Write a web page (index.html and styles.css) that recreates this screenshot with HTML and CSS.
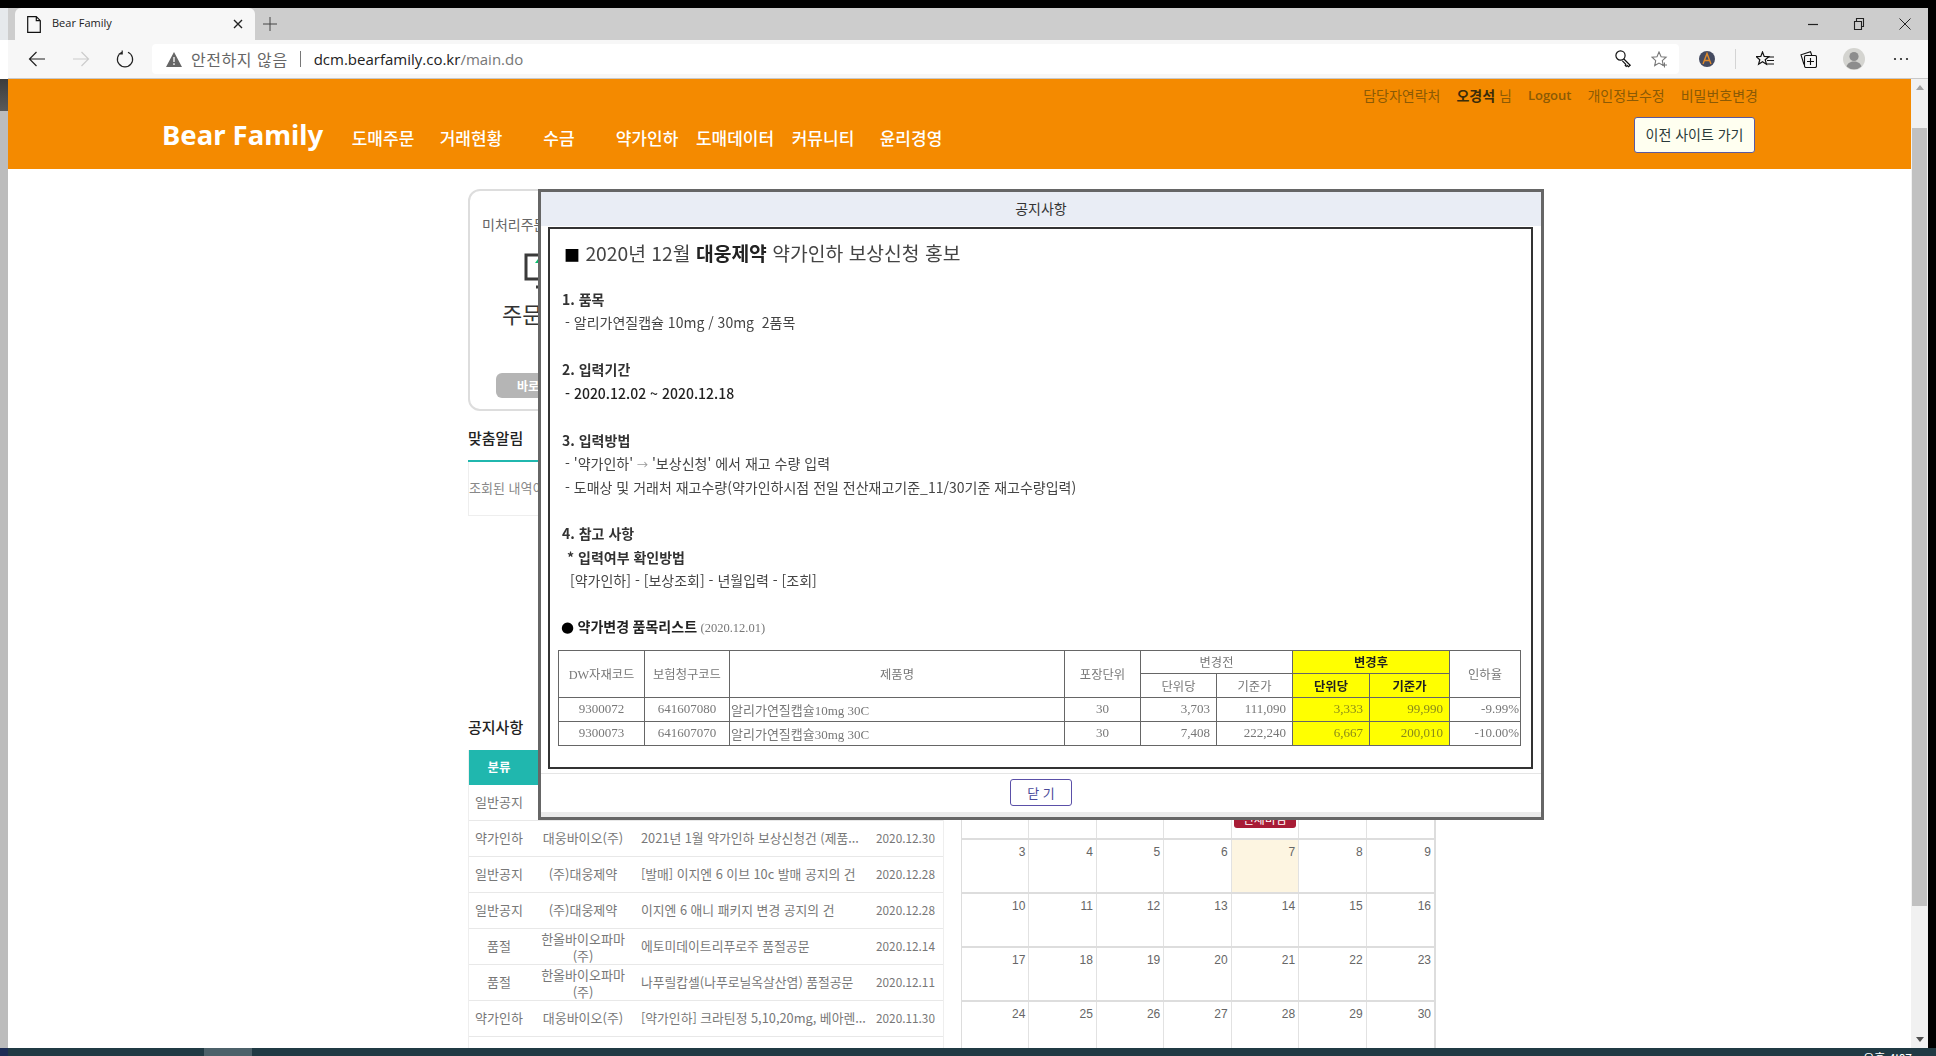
FILE: index.html
```html
<!DOCTYPE html>
<html lang="ko">
<head>
<meta charset="utf-8">
<title>Bear Family</title>
<link rel="stylesheet" href="styles.css">
</head>
<body>
<div class="top-edge"></div>
<div class="desk">
  <div class="behind">
    <div class="behind-a"></div>
    <div class="behind-b"></div>
    <div class="behind-c"></div>
    <div class="behind-d"></div>
  </div>
  <div class="browser">
    <div class="tabstrip">
      <div class="tab">
        <svg class="tab-page" width="14" height="17" viewBox="0 0 14 17"><path d="M.7.7h8.6l4 4v11.6H.7zM9.3.7v4h4" fill="none" stroke="#111" stroke-width="1.2"/></svg>
        <span class="tab-title">Bear Family</span>
        <svg class="tab-x" width="10" height="10" viewBox="0 0 10 10"><path d="M1 1l8 8M9 1l-8 8" stroke="#222" stroke-width="1.4"/></svg>
      </div>
      <svg class="tab-plus" width="14" height="14" viewBox="0 0 14 14"><path d="M7 0v14M0 7h14" stroke="#444" stroke-width="1"/></svg>
      <div class="win-ctrls">
        <svg width="12" height="12" viewBox="0 0 12 12"><path d="M1 6.500h10" stroke="#222" stroke-width="1.2"/></svg>
        <svg width="12" height="12" viewBox="0 0 12 12"><path d="M1.500 3.500h7v8h-7zM3.500 3.500v-3h7v8h-2" fill="none" stroke="#222" stroke-width="1.1"/></svg>
        <svg width="12" height="12" viewBox="0 0 12 12"><path d="M.5.5l11 11M11.500.5l-11 11" stroke="#222" stroke-width="1"/></svg>
      </div>
    </div>
    <div class="toolbar">
      <svg class="tb-back" width="18" height="16" viewBox="0 0 18 16"><path d="M17 8H1.500M8.500 1l-7 7 7 7" fill="none" stroke="#222" stroke-width="1.2"/></svg>
      <svg class="tb-fwd" width="18" height="16" viewBox="0 0 18 16"><path d="M1 8h15.500M9.500 1l7 7-7 7" fill="none" stroke="#ccc" stroke-width="1.2"/></svg>
      <svg class="tb-reload" width="18" height="18" viewBox="0 0 18 18"><path d="M6 2.200A7.600 7.600 0 1 0 12 2.200M6.200 .5v3.400H2.800" fill="none" stroke="#222" stroke-width="1.2"/></svg>
      <div class="address">
        <svg class="warn" width="16" height="15" viewBox="0 0 16 15"><path d="M8 0l8 15H0z" fill="#666"/><path d="M8 5v5M8 11.300v1.600" stroke="#fff" stroke-width="1.3"/></svg>
        <span class="insecure">안전하지 않음</span>
        <span class="addr-sep"></span>
        <span class="host">dcm.bearfamily.co.kr</span><span class="path">/main.do</span>
        <svg class="key" width="17" height="18" viewBox="0 0 17 18"><circle cx="5.500" cy="5.500" r="4.600" fill="none" stroke="#111" stroke-width="1.2"/><path d="M8.600 8.800l6.600 6.400-1.700 1.600-1.300-1.200-1 .8-1-1.100 .6-1-3.400-3.400" fill="none" stroke="#111" stroke-width="1.2"/></svg>
        <svg class="star-plus" width="17" height="17" viewBox="0 0 17 17"><path d="M8 1l2.100 4.700 5 .5-3.800 3.400 1 4.900L8 12.100 3.700 14.600l1-4.900L1 6.200l5-.5z" fill="none" stroke="#777" stroke-width="1.1"/><path d="M13.500 11.500v5M11 14h5" stroke="#777" stroke-width="1"/></svg>
      </div>
      <svg class="ext" width="16" height="16" viewBox="0 0 16 16"><circle cx="8" cy="8" r="8" fill="#444a60"/><path d="M4 13L8 2.500 12 13M5.500 9.500h5" fill="none" stroke="#e08a2a" stroke-width="1.400"/></svg>
      <span class="tb-sep"></span>
      <svg class="favs" width="18" height="17" viewBox="0 0 18 17"><path d="M6.500 1l1.700 4.400 4.600.3-3.600 3 1.200 4.500-3.900-2.500-3.900 2.500 1.200-4.500L.2 5.700l4.600-.3z" fill="none" stroke="#111" stroke-width="1.2"/><path d="M11 6h7M11 9.500h7M10 13h8" stroke="#111" stroke-width="1.1"/></svg>
      <svg class="colls" width="17" height="17" viewBox="0 0 17 17"><path d="M4 13.500L1 3.800 10.500.8l1.200 3.200" fill="none" stroke="#111" stroke-width="1.1"/><rect x="4.500" y="4.500" width="12" height="12" rx="1.500" fill="#f7f7f7" stroke="#111" stroke-width="1.1"/><path d="M10.500 7v7M7 10.500h7" stroke="#111" stroke-width="1.1"/></svg>
      <svg class="avatar" width="22" height="22" viewBox="0 0 22 22"><circle cx="11" cy="11" r="11" fill="#d4d4d0"/><circle cx="11" cy="8.500" r="4.600" fill="#8d8d8d"/><path d="M3.600 18.500c1-3.600 4-5 7.400-5s6.400 1.400 7.400 5A11 11 0 0 1 3.600 18.500z" fill="#8d8d8d"/></svg>
      <svg class="dots" width="16" height="4" viewBox="0 0 16 4"><circle cx="2" cy="2" r="1.100" fill="#222"/><circle cx="8" cy="2" r="1.100" fill="#222"/><circle cx="14" cy="2" r="1.100" fill="#222"/></svg>
    </div>
    <div class="page-area">
      <div class="viewport">
        <header class="site-head">
          <div class="util">
            <a class="util-link">담당자연락처</a>
            <span class="util-link"><b class="user">오경석</b> 님</span>
            <a class="util-link util-logout">Logout</a>
            <a class="util-link">개인정보수정</a>
            <a class="util-link">비밀번호변경</a>
          </div>
          <div class="main-row">
            <div class="logo">Bear Family</div>
            <nav class="gnb">
              <a>도매주문</a><a>거래현황</a><a>수금</a><a>약가인하</a><a>도매데이터</a><a>커뮤니티</a><a>윤리경영</a>
            </nav>
            <button class="old-site">이전 사이트 가기</button>
          </div>
        </header>
        <main class="content">
          <section class="col-left">
            <div class="order-card">
              <p class="card-label">미처리주문</p>
              <svg class="monitor" width="50" height="36" viewBox="0 0 50 36"><path d="M2 2h46v24H2zM18 26v7M12 34h26" fill="none" stroke="#3a3a3a" stroke-width="3"/><path d="M17 2l-6 8h4v10h4V10h4z" fill="#0cbf6d"/></svg>
              <p class="card-big">주문 현황</p>
              <span class="card-btn">바로가기</span>
            </div>
            <h2 class="sec-title">맞춤알림</h2>
            <div class="alert-box">조회된 내역이 없습니다.</div>
            <h2 class="sec-title notice-title">공지사항</h2>
            <table class="notice-table">
              <colgroup><col class="c1"><col class="c2"><col class="c3"><col class="c4"></colgroup>
              <thead><tr><th>분류</th><th>제약사</th><th>제목</th><th>등록일</th></tr></thead>
              <tbody>
                <tr><td>일반공지</td><td>(주)대웅제약</td><td class="t">공지사항</td><td>2021.01.04</td></tr>
                <tr><td>약가인하</td><td>대웅바이오(주)</td><td class="t">2021년 1월 약가인하 보상신청건 (제품...</td><td>2020.12.30</td></tr>
                <tr><td>일반공지</td><td>(주)대웅제약</td><td class="t">[발매] 이지엔 6 이브 10c 발매 공지의 건</td><td>2020.12.28</td></tr>
                <tr><td>일반공지</td><td>(주)대웅제약</td><td class="t">이지엔 6 애니 패키지 변경 공지의 건</td><td>2020.12.28</td></tr>
                <tr><td>품절</td><td class="wrap">한올바이오파마(주)</td><td class="t">에토미데이트리푸로주 품절공문</td><td>2020.12.14</td></tr>
                <tr><td>품절</td><td class="wrap">한올바이오파마(주)</td><td class="t">나푸릴캅셀(나푸로닐옥살산염) 품절공문</td><td>2020.12.11</td></tr>
                <tr><td>약가인하</td><td>대웅바이오(주)</td><td class="t">[약가인하] 크라틴정 5,10,20mg, 베아렌...</td><td>2020.11.30</td></tr>
                <tr><td></td><td></td><td></td><td></td></tr>
              </tbody>
            </table>
          </section>
          <section class="calendar">
            <div class="week">
              <div class="day"><span>27</span></div><div class="day"><span>28</span></div><div class="day"><span>29</span></div><div class="day"><span>30</span></div><div class="day"><span>31</span><em class="badge">전체마감</em></div><div class="day"><span>1</span></div><div class="day"><span>2</span></div>
            </div>
            <div class="week">
              <div class="day"><span>3</span></div><div class="day"><span>4</span></div><div class="day"><span>5</span></div><div class="day"><span>6</span></div><div class="day today"><span>7</span></div><div class="day"><span>8</span></div><div class="day"><span>9</span></div>
            </div>
            <div class="week">
              <div class="day"><span>10</span></div><div class="day"><span>11</span></div><div class="day"><span>12</span></div><div class="day"><span>13</span></div><div class="day"><span>14</span></div><div class="day"><span>15</span></div><div class="day"><span>16</span></div>
            </div>
            <div class="week">
              <div class="day"><span>17</span></div><div class="day"><span>18</span></div><div class="day"><span>19</span></div><div class="day"><span>20</span></div><div class="day"><span>21</span></div><div class="day"><span>22</span></div><div class="day"><span>23</span></div>
            </div>
            <div class="week">
              <div class="day"><span>24</span></div><div class="day"><span>25</span></div><div class="day"><span>26</span></div><div class="day"><span>27</span></div><div class="day"><span>28</span></div><div class="day"><span>29</span></div><div class="day"><span>30</span></div>
            </div>
          </section>
        </main>
        <div class="modal">
          <div class="modal-title">공지사항</div>
          <div class="modal-body">
            <div class="doc">
              <h1 class="doc-h"><span class="sq">■</span> 2020년 12월 <b>대웅제약</b> 약가인하 보상신청 홍보</h1>
              <p class="l h">1. 품목</p>
              <p class="l s">- 알리가연질캡슐 10mg / 30mg&nbsp; 2품목</p>
              <p class="l">&nbsp;</p>
              <p class="l h">2. 입력기간</p>
              <p class="l s strong">- 2020.12.02 ~ 2020.12.18</p>
              <p class="l">&nbsp;</p>
              <p class="l h">3. 입력방법</p>
              <p class="l s">- '약가인하' <span class="arrow">→</span> '보상신청' 에서 재고 수량 입력</p>
              <p class="l s">- 도매상 및 거래처 재고수량(약가인하시점 전일 전산재고기준_11/30기준 재고수량입력)</p>
              <p class="l">&nbsp;</p>
              <p class="l h">4. 참고 사항</p>
              <p class="l s2 h">* 입력여부 확인방법</p>
              <p class="l s3">[약가인하] - [보상조회] - 년월입력 - [조회]</p>
              <p class="l">&nbsp;</p>
              <p class="l list-h"><span class="dot">●</span> 약가변경 품목리스트 <small>(2020.12.01)</small></p>
              <table class="price">
                <colgroup><col class="p1"><col class="p2"><col class="p3"><col class="p4"><col class="p5"><col class="p6"><col class="p7"><col class="p8"><col class="p9"></colgroup>
                <tr><th rowspan="2">DW자재코드</th><th rowspan="2">보험청구코드</th><th rowspan="2">제품명</th><th rowspan="2">포장단위</th><th colspan="2">변경전</th><th colspan="2" class="y b">변경후</th><th rowspan="2">인하율</th></tr>
                <tr class="sub"><th>단위당</th><th>기준가</th><th class="y b">단위당</th><th class="y b">기준가</th></tr>
                <tr class="data"><td>9300072</td><td>641607080</td><td class="name">알리가연질캡슐10mg 30C</td><td>30</td><td class="r">3,703</td><td class="r">111,090</td><td class="r y">3,333</td><td class="r y">99,990</td><td class="r pct">-9.99%</td></tr>
                <tr class="data"><td>9300073</td><td>641607070</td><td class="name">알리가연질캡슐30mg 30C</td><td>30</td><td class="r">7,408</td><td class="r">222,240</td><td class="r y">6,667</td><td class="r y">200,010</td><td class="r pct">-10.00%</td></tr>
              </table>
            </div>
          </div>
          <div class="modal-foot"><button class="close-btn">닫 기</button></div>
          <div class="modal-strip"></div>
        </div>
      </div>
      <div class="scrollbar">
        <span class="sb-up"></span>
        <div class="sb-track"><div class="sb-thumb"></div></div>
        <span class="sb-down"></span>
      </div>
    </div>
  </div>
  <div class="right-edge"></div>
</div>
<footer class="taskbar">
  <span class="tb-navy"></span>
  <span class="tb-active"></span>
  <span class="tb-clock">오후 4:07</span>
</footer>
</body>
</html>
```
FILE: styles.css
```css
* { box-sizing: border-box; }
html, body { margin: 0; padding: 0; }
body {
  width: 1936px;
  height: 1056px;
  overflow: hidden;
  background: #000;
  display: flex;
  flex-direction: column;
  font-family: "Noto Sans CJK KR", "Noto Sans", sans-serif;
}
p, h1, h2 { margin: 0; font-weight: normal; }
button { font-family: inherit; cursor: pointer; }

.top-edge { height: 8px; flex: none; background: #000; }
.desk { display: flex; height: 1040px; flex: none; }
.behind { width: 8px; display: flex; flex-direction: column; }
.behind-a { height: 32px; background: #e6e9ec; }
.behind-b { height: 39px; background: #fff; }
.behind-c { height: 32px; background: linear-gradient(#3c3c3c, #5a5a5a); }
.behind-d { flex: 1; background: #bcbcbc; }
.right-edge { width: 8px; background: #000; }

.browser { width: 1920px; display: flex; flex-direction: column; }

/* tab strip */
.tabstrip { height: 32px; background: #cdcdcd; display: flex; align-items: center; padding-left: 7px; flex: none; }
.tab { width: 240px; height: 32px; background: #f7f7f7; border-radius: 6px 6px 0 0; display: flex; align-items: center; padding: 0 12px; }
.tab-page { flex: none; }
.tab-title { font-family: "Open Sans", sans-serif; font-size: 11px; line-height: 14px; padding-bottom: 2px; color: #222; margin-left: 11px; flex: 1; }
.tab-plus { margin-left: 8px; }
.win-ctrls { margin-left: auto; display: flex; gap: 34px; padding-right: 17px; }

/* toolbar */
.toolbar { height: 39px; background: #f7f7f7; border-bottom: 1px solid #c8c8c8; display: flex; align-items: center; padding-left: 20px; flex: none; }
.tb-fwd { margin-left: 26px; }
.tb-reload { margin-left: 26px; }
.address { width: 1527px; height: 30px; background: #fff; border-radius: 4px; margin-left: 18px; display: flex; align-items: center; padding-left: 14px; }
.warn { flex: none; }
.insecure { font-size: 16px; letter-spacing: .55px; color: #666; margin-left: 9px; white-space: nowrap; }
.addr-sep { width: 1px; height: 16px; background: #777; margin: 0 13px 0 12px; }
.host { font-family: "Open Sans", sans-serif; font-size: 15px; color: #222; }
.path { font-family: "Open Sans", sans-serif; font-size: 15px; color: #777; }
.key { margin-left: auto; }
.star-plus { margin: 0 11px 0 19px; }
.ext { margin-left: 20px; }
.tb-sep { width: 1px; height: 20px; background: #d4d4d4; margin-left: 20px; }
.favs { margin-left: 20px; }
.colls { margin-left: 26px; }
.avatar { margin-left: 26px; }
.dots { margin-left: 28px; }

/* page */
.page-area { flex: 1; display: flex; min-height: 0; height: 969px; }
.viewport { width: 1903px; position: relative; overflow: hidden; background: #fff; }
.scrollbar { width: 17px; background: #f1f1f1; display: flex; flex-direction: column; align-items: center; }
.sb-up, .sb-down { height: 17px; width: 17px; flex: none; display: flex; align-items: center; justify-content: center; }
.sb-up::before { content: ""; border: 4px solid transparent; border-top: 0; border-bottom: 5px solid #a3a3a3; }
.sb-down::before { content: ""; border: 4px solid transparent; border-bottom: 0; border-top: 5px solid #505050; }
.sb-track { flex: 1; width: 100%; padding-top: 32px; }
.sb-thumb { height: 778px; background: #c1c1c1; margin: 0 1px; }

/* site header */
.site-head { height: 90px; background: #f48a00; padding: 0 153px 0 154px; }
.util { height: 36px; padding-bottom: 5px; display: flex; justify-content: flex-end; align-items: center; gap: 16px; }
.util-link { font-size: 14px; color: #8b5a05; white-space: nowrap; }
.util-logout { font-family: "Open Sans", sans-serif; font-size: 13px; font-weight: 600; }
.user { color: #3b2c0a; font-weight: 700; }
.main-row { height: 54px; display: flex; align-items: flex-start; }
.logo { font-family: "Noto Sans", sans-serif; font-weight: 700; font-size: 27.500px; line-height: 36px; height: 36px; margin-top: 2px; color: #fff; width: 177px; white-space: nowrap; }
.gnb { display: grid; grid-template-columns: repeat(7, 88px); margin-top: 7px; }
.gnb a { text-align: center; font-size: 17px; font-weight: 500; color: #fff; line-height: 32px; white-space: nowrap; }
.old-site { margin-left: auto; margin-right: 3px; margin-top: 2px; width: 121px; height: 36px; background: #fffff0; border: 1px solid #5a5aa0; border-radius: 3px; font-size: 14px; line-height: 18px; color: #2a3a3a; padding: 0 0 3px; }

/* content */
.content { display: flex; gap: 17px; padding: 20px 0 0 460px; }
.col-left { width: 476px; flex: none; }

.order-card { width: 240px; height: 222px; border: 2px solid #ddd; border-radius: 12px; padding: 24px 0 0 12px; display: flex; flex-direction: column; align-items: flex-start; }
.card-label { font-size: 14px; color: #666; line-height: 18px; white-space: nowrap; }
.monitor { margin: 20px 0 0 42px; }
.card-big { font-size: 22px; color: #333; line-height: 32px; margin: 8px 0 0 20px; white-space: nowrap; }
.card-btn { margin: 44px 0 0 14px; width: 130px; height: 25px; background: #b5b5b5; border-radius: 6px; color: #fff; font-size: 12px; font-weight: 700; line-height: 25px; padding-left: 21px; }

.sec-title { font-size: 15px; font-weight: 500; color: #222; line-height: 22px; }
.order-card + .sec-title { margin-top: 16px; padding-bottom: 11px; border-bottom: 2px solid #20b7ae; }
.alert-box { height: 54px; border: 1px solid #eee; border-top: 0; font-size: 13px; color: #888; line-height: 52px; white-space: nowrap; }
.notice-title { margin-top: 200px; height: 34px; }

.notice-table { width: 476px; table-layout: fixed; border-collapse: separate; border-spacing: 0; border-left: 1px solid #eee; border-right: 1px solid #eee; }
.c1 { width: 60px; }
.c2 { width: 108px; }
.c3 { width: 239px; }
.c4 { width: 67px; }
.notice-table th { height: 35px; background: #20b7ae; color: #fff; font-size: 12.500px; font-weight: 700; padding: 0 0 2px; }
.notice-table td { height: 36px; border-bottom: 1px solid #e8e8e8; font-size: 13px; color: #777; text-align: center; padding: 0 4px 2px; line-height: 17px; white-space: nowrap; }
.notice-table td.wrap { white-space: normal; word-break: break-all; padding: 0 8px; }
.notice-table td.t { font-size: 12.800px; text-align: left; padding: 0 0 2px 4px; overflow: hidden; }
.notice-table td:last-child { padding: 0 0 2px; font-size: 11.800px; text-align: left; }

/* calendar */
.calendar { width: 475px; flex: none; margin-top: 597px; border-left: 1px solid #ddd; border-right: 2px solid #ddd; }
.week { display: grid; grid-template-columns: repeat(7, 1fr); height: 54px; border-bottom: 2px solid #ddd; }
.day { position: relative; border-right: 1px solid #e2e2e2; text-align: right; padding: 3px 3px 0 0; font-family: "Liberation Sans", sans-serif; font-size: 12px; color: #666; line-height: 18px; }
.day:last-child { border-right: 0; }
.today { background: #fdf5e1; }
.badge { position: absolute; left: 2px; right: 2px; top: 24px; height: 18px; background: #a81c36; color: #fff; border-radius: 3px; font-family: "Noto Sans CJK KR", sans-serif; font-style: normal; font-size: 12px; text-align: center; line-height: 18px; }

/* modal */
.modal { position: absolute; left: 530px; top: 110px; width: 1006px; height: 631px; border: 3px solid #666; background: #fff; display: flex; flex-direction: column; }
.modal-title { height: 34px; flex: none; background: #e9edf5; text-align: center; font-size: 14px; color: #333; line-height: 32px; }
.modal-body { margin: 1px 8px 0 7px; height: 542px; flex: none; border: 2px solid #333; }
.doc { padding: 9px 0 0 8px; filter: blur(0.3px); }
.doc-h { font-size: 19.300px; line-height: 30px; color: #444; padding-left: 6px; margin-bottom: 19px; white-space: nowrap; }
.doc-h b { font-weight: 700; color: #222; }
.sq { color: #000; font-size: 16px; }
.l { font-size: 14px; line-height: 23.450px; color: #444; height: 23.450px; padding-left: 4px; white-space: nowrap; }
.l.h { font-weight: 700; color: #333; }
.l.s { padding-left: 7px; }
.l.s2 { padding-left: 9px; }
.l.s3 { padding-left: 12px; }
.arrow { font-size: 11px; color: #999; }
.strong { font-weight: 500; color: #222; }
.list-h { font-weight: 700; color: #222; padding-left: 3px; font-family: "Liberation Serif", "Noto Sans CJK KR", serif; }
.dot { font-family: "DejaVu Sans", sans-serif; font-size: 15px; color: #000; }
.list-h small { font-weight: 400; font-size: 12.500px; color: #777; }

.price { width: 962px; margin-top: 10px; table-layout: fixed; border-collapse: collapse; border: 1px solid #555; font-family: "Liberation Serif", "Noto Sans CJK KR", serif; color: #777; font-size: 13px; }
.p1 { width: 86px; }
.p2 { width: 85px; }
.p3 { width: 335px; }
.p4 { width: 76px; }
.p5 { width: 76px; }
.p6 { width: 76px; }
.p7 { width: 77px; }
.p8 { width: 80px; }
.p9 { width: 71px; }
.price th, .price td { border: 1px solid #666; height: 23.750px; padding: 0 1px; font-weight: 400; text-align: center; white-space: nowrap; }
.price th { font-size: 12.300px; }
.price .data td { border-top-color: #444; }
.price td.name { text-align: left; }
.price td.r { text-align: right; padding-right: 6px; }
.price td.pct { padding-right: 1px; }
.price .y { background: #ffff00; color: #8a8a1a; }
.price .b { font-weight: 700; color: #222; }

.modal-foot { margin-top: 4px; height: 39px; flex: none; border-top: 1px solid #e5e5e5; display: flex; justify-content: center; padding-top: 5px; }
.close-btn { width: 62px; height: 27px; background: #fff; border: 1px solid #5b50a8; border-radius: 3px; color: #4a4a9a; font-size: 13px; padding: 0; }
.modal-strip { flex: 1; background: #ebebeb; }

/* taskbar */
.taskbar { height: 8px; flex: none; background: #203a44; display: flex; overflow: hidden; }
.tb-navy { width: 8px; background: #1c2c55; }
.tb-active { width: 48px; background: #4c616a; margin-left: 196px; }
.tb-clock { margin-left: auto; margin-right: 24px; font-size: 12px; line-height: 14px; color: #fff; padding-top: 3px; }
```
